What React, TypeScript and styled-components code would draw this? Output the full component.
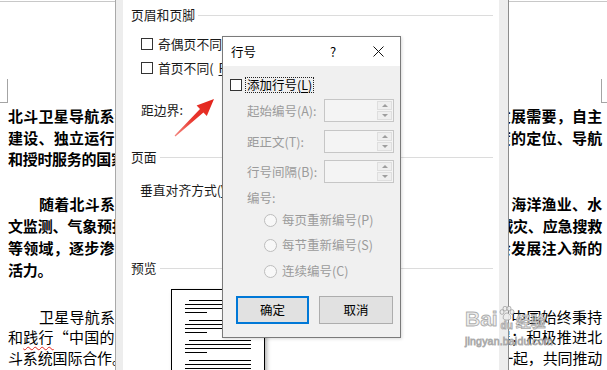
import React from "react";
import styled, { createGlobalStyle, css } from "styled-components";

const GlobalStyle = createGlobalStyle`
  html, body {
    margin: 0;
    padding: 0;
    background: #fff;
  }
  body {
    font-family: "Noto Sans CJK SC", "Noto Sans", sans-serif;
    color: #000;
  }
`;

const Screen = styled.div`
  position: relative;
  width: 607px;
  height: 370px;
  overflow: hidden;
  background: #fff;
`;

/* ---------- document page behind the dialogs ---------- */

const Page = styled.div`
  margin-top: 1px;
  border-top: 1px solid #c8c8c8;
`;

const MarkRow = styled.div`
  display: flex;
  justify-content: space-between;
  align-items: flex-end;
  height: 101px;
`;

const CropMark = styled.div<{ $side: "left" | "right" }>`
  height: 24px;
  box-sizing: border-box;
  border-bottom: 1px solid #a4a4a4;
  ${(p) =>
    p.$side === "left"
      ? css`
          width: 8px;
          border-right: 1px solid #a4a4a4;
        `
      : css`
          width: 6px;
          border-left: 1px solid #a4a4a4;
        `}
`;

const Doc = styled.div`
  padding: 0 5px 0 8px;
`;

const Para = styled.div<{ $bold?: boolean; $lh: number; $gap: number }>`
  margin-top: ${(p) => p.$gap}px;
  font-size: 15px;
  letter-spacing: -0.3px;
  line-height: ${(p) => p.$lh}px;
  font-weight: ${(p) => (p.$bold ? 700 : 400)};
`;

const Line = styled.div<{ $indent?: boolean; $last?: boolean }>`
  padding-left: ${(p) => (p.$indent ? "31px" : "0")};
  text-align: justify;
  text-align-last: ${(p) => (p.$last ? "left" : "justify")};
`;

const Typo = styled.span`
  text-decoration: underline wavy #e0231b;
  text-decoration-thickness: 1px;
  text-underline-offset: 3px;
`;

/* ---------- page setup dialog (partly visible) ---------- */

const SetupFrame = styled.div`
  position: absolute;
  left: 115px;
  top: 0;
  width: 394px;
  height: 370px;
  box-sizing: border-box;
  display: flex;
  border-left: 1px solid #a9a9a9;
  border-right: 1px solid #8c8c8c;
  background: #ededed;
  padding: 0 9px 0 7px;
`;

const SetupBody = styled.div`
  flex: 1;
  background: #fff;
  display: flex;
  flex-direction: column;
  padding: 0 6px 0 8px;
  font-size: 12.8px;
  line-height: 18px;
  color: #1a1a1a;
  overflow: hidden;
`;

const GroupHeader = styled.div<{ $top: number }>`
  margin-top: ${(p) => p.$top}px;
  height: 18px;
  display: flex;
  align-items: center;
  gap: 3px;
  white-space: nowrap;
  &::after {
    content: "";
    flex: 1;
    height: 1px;
    background: #dcdcdc;
  }
`;

const SetupRow = styled.div<{ $top: number; $indent: number }>`
  margin-top: ${(p) => p.$top}px;
  padding-left: ${(p) => p.$indent}px;
  height: 18px;
  display: flex;
  align-items: center;
  gap: 5px;
  white-space: nowrap;
`;

const CheckBox = styled.span`
  flex: none;
  width: 12px;
  height: 12px;
  box-sizing: border-box;
  border: 1px solid #333;
  background: #fff;
`;

const Key = styled.span`
  text-decoration: underline;
  text-underline-offset: 2px;
`;

const PreviewSheet = styled.div`
  margin: 12px 0 0 40px;
  width: 94px;
  height: 110px;
  flex: none;
  box-sizing: border-box;
  border: 1px solid #000;
  background: #fff;
  box-shadow: 2px 2px 4px rgba(0, 0, 0, 0.3);
  padding: 10px 0 0 13px;
`;

const PreviewPara = styled.div`
  display: flex;
  flex-direction: column;
  gap: 3px;
  margin-bottom: 7px;
`;

const PreviewLine = styled.div<{ $kind: "first" | "full" | "short" }>`
  height: 1px;
  background: #000;
  margin-left: ${(p) => (p.$kind === "first" ? 4 : 0)}px;
  width: ${(p) => (p.$kind === "short" ? 22 : p.$kind === "first" ? 62 : 66)}px;
`;

/* ---------- line numbers dialog ---------- */

const LineDialog = styled.div`
  position: absolute;
  left: 222px;
  top: 36px;
  width: 179px;
  height: 302px;
  box-sizing: border-box;
  border: 1px solid #7a7a7a;
  background: #f0f0f0;
  display: flex;
  flex-direction: column;
  font-size: 12.5px;
  line-height: 18px;
  box-shadow: 1px 1px 3px rgba(0, 0, 0, 0.15);
`;

const TitleBar = styled.div`
  height: 29px;
  flex: none;
  background: #fff;
  display: flex;
  align-items: center;
  padding-left: 8px;
  color: #000;
`;

const Title = styled.div`
  flex: 1;
`;

const HelpButton = styled.div`
  width: 24px;
  text-align: center;
  font-size: 13px;
  margin-right: 11px;
`;

const CloseButton = styled.div`
  width: 44px;
  height: 29px;
  display: flex;
  align-items: center;
  justify-content: center;
`;

const DialogBody = styled.div`
  display: flex;
  flex-direction: column;
  padding: 0 6px 0 7px;
`;

const Row = styled.div<{ $top: number; $indent?: number }>`
  margin-top: ${(p) => p.$top}px;
  padding-left: ${(p) => p.$indent ?? 0}px;
  display: flex;
  align-items: center;
  white-space: nowrap;
`;

const FocusLabel = styled.span`
  margin-left: 3px;
  padding: 0 1px;
  line-height: 14px;
  border: 1px dotted #222;
`;

const Muted = styled.span`
  flex: 1;
  color: #9b9b9b;
`;

const SpinBox = styled.div`
  width: 70px;
  height: 23px;
  box-sizing: border-box;
  border: 1px solid #c6c6c6;
  background: #f4f4f4;
  display: flex;
  justify-content: flex-end;
  padding: 1px;
`;

const SpinButtons = styled.div`
  width: 15px;
  display: flex;
  flex-direction: column;
  gap: 1px;
`;

const SpinButton = styled.div`
  flex: 1;
  box-sizing: border-box;
  border: 1px solid #dedede;
  background: #efefef;
  display: flex;
  align-items: center;
  justify-content: center;
`;

const Tri = styled.span<{ $down?: boolean }>`
  width: 0;
  height: 0;
  border-left: 3px solid transparent;
  border-right: 3px solid transparent;
  ${(p) =>
    p.$down
      ? css`
          border-top: 3px solid #9e9e9e;
        `
      : css`
          border-bottom: 3px solid #9e9e9e;
        `}
`;

const Radio = styled.span`
  flex: none;
  width: 13px;
  height: 13px;
  box-sizing: border-box;
  border-radius: 50%;
  border: 1px solid #bdbdbd;
  background: #f8f8f8;
  margin-right: 5px;
`;

const ButtonRow = styled.div`
  margin-top: 16px;
  padding-left: 6px;
  display: flex;
  gap: 10px;
`;

const DlgButton = styled.div<{ $primary?: boolean }>`
  width: ${(p) => (p.$primary ? 73 : 74)}px;
  height: 28px;
  box-sizing: border-box;
  background: #e1e1e1;
  border: ${(p) => (p.$primary ? "2px solid #0078d7" : "1px solid #adadad")};
  display: flex;
  align-items: center;
  justify-content: center;
  color: #000;
`;

/* ---------- overlays ---------- */

const ArrowSvg = styled.svg`
  position: absolute;
  left: 165px;
  top: 92px;
`;

const Watermark = styled.div`
  position: absolute;
  left: 465px;
  top: 306px;
  display: flex;
  flex-direction: column;
  font-family: "Liberation Sans", Arial, sans-serif;
  color: rgba(236, 236, 236, 0.9);
  -webkit-text-stroke: 0.9px rgba(140, 140, 140, 0.7);
  pointer-events: none;
`;

const MarkTop = styled.div`
  display: flex;
  align-items: flex-end;
  gap: 1px;
`;

const BaiText = styled.span`
  font-size: 21px;
  font-weight: 700;
  line-height: 24px;
`;

const DuBlock = styled.div`
  display: flex;
  flex-direction: column;
  align-items: center;
  font-size: 10px;
  font-weight: 700;
  line-height: 10px;
`;

const JingyanText = styled.span`
  font-family: "Noto Sans CJK SC", sans-serif;
  font-size: 15px;
  font-weight: 700;
  line-height: 20px;
`;

const SiteText = styled.span`
  margin-top: 4px;
  font-size: 10.5px;
  letter-spacing: 0.2px;
`;

function CloseIcon() {
  return (
    <svg width="11" height="11" viewBox="0 0 11 11">
      <path d="M0.5 0.5 L10.5 10.5 M10.5 0.5 L0.5 10.5" stroke="#111" strokeWidth="1" />
    </svg>
  );
}

function Paw() {
  return (
    <svg width="16" height="15" viewBox="0 0 16 15">
      <g fill="rgba(236,236,236,0.9)" stroke="rgba(140,140,140,0.7)" strokeWidth="0.9">
        <ellipse cx="3" cy="6" rx="2" ry="2.4" />
        <ellipse cx="6" cy="2.6" rx="2" ry="2.4" />
        <ellipse cx="10" cy="2.6" rx="2" ry="2.4" />
        <ellipse cx="13" cy="6" rx="2" ry="2.4" />
        <path d="M8 7 C5 7 3.5 11 4.5 13 C5.5 14.5 10.5 14.5 11.5 13 C12.5 11 11 7 8 7 Z" />
      </g>
    </svg>
  );
}

function Spin() {
  return (
    <SpinBox>
      <SpinButtons>
        <SpinButton>
          <Tri />
        </SpinButton>
        <SpinButton>
          <Tri $down />
        </SpinButton>
      </SpinButtons>
    </SpinBox>
  );
}

const previewParas = [0, 1, 2, 3];

export default function App() {
  return (
    <Screen lang="zh-CN">
      <GlobalStyle />

      <Page>
        <MarkRow>
          <CropMark $side="left" />
          <CropMark $side="right" />
        </MarkRow>
        <Doc>
          <Para $bold $lh={21.5} $gap={2}>
            <Line>北斗卫星导航系统（以下简称北斗系统）是中国着眼国家安全和经济社会发展需要，自主</Line>
            <Line>建设、独立运行的卫星导航系统，是为全球用户提供全天候全天时、高精度的定位、导航</Line>
            <Line $last>和授时服务的国家重要时空基础设施。</Line>
          </Para>
          <Para $bold $lh={22} $gap={23}>
            <Line $indent>随着北斗系统建设和服务能力的发展，相关产品广泛应用于交通运输、海洋渔业、水</Line>
            <Line>文监测、气象预报、测绘地理信息、森林防火、通信时统、电力调度、救灾减灾、应急搜救</Line>
            <Line>等领域，逐步渗透到人类社会生产和人们生活方方面面，为全球经济和社会发展注入新的</Line>
            <Line $last>活力。</Line>
          </Para>
          <Para $lh={20.5} $gap={26}>
            <Line $indent>卫星导航系统是全球公共资源，多系统兼容与互操作已成为发展趋势。中国始终秉持</Line>
            <Line>
              和<Typo>践行</Typo>“中国的北斗，世界的北斗”发展理念，服务“一带一路”建设发展；积极推进北
            </Line>
            <Line>斗系统国际合作。与其他卫星导航系统携手，与各个国家、地区和国际组织一起，共同推动</Line>
          </Para>
        </Doc>
      </Page>

      <SetupFrame>
        <SetupBody>
          <GroupHeader $top={6}>页眉和页脚</GroupHeader>
          <SetupRow $top={10.5} $indent={10}>
            <CheckBox />
            奇偶页不同(<Key>O</Key>)
          </SetupRow>
          <SetupRow $top={6} $indent={10}>
            <CheckBox />
            首页不同(<Key>P</Key>)
          </SetupRow>
          <SetupRow $top={24.5} $indent={10}>
            距边界:
          </SetupRow>
          <GroupHeader $top={29}>页面</GroupHeader>
          <SetupRow $top={15} $indent={9}>
            <span>
              垂直对齐方式(<Key>V</Key>):
            </span>
          </SetupRow>
          <GroupHeader $top={60}>预览</GroupHeader>
          <PreviewSheet>
            {previewParas.map((i) => (
              <PreviewPara key={i}>
                <PreviewLine $kind="first" />
                <PreviewLine $kind="full" />
                <PreviewLine $kind="full" />
                <PreviewLine $kind="short" />
              </PreviewPara>
            ))}
          </PreviewSheet>
        </SetupBody>
      </SetupFrame>

      <ArrowSvg width="60" height="50" viewBox="165 92 60 50">
        <defs>
          <linearGradient id="arrowFill" x1="175" y1="136" x2="214" y2="99" gradientUnits="userSpaceOnUse">
            <stop offset="0" stopColor="#f3877f" />
            <stop offset="0.45" stopColor="#e9372e" />
            <stop offset="1" stopColor="#e2231b" />
          </linearGradient>
        </defs>
        <polygon
          points="174.6,135.5 200,108.9 196.6,105.4 214,99 206.8,116 203.4,112.5 175.4,136.5"
          fill="url(#arrowFill)"
        />
      </ArrowSvg>

      <LineDialog>
        <TitleBar>
          <Title>行号</Title>
          <HelpButton>?</HelpButton>
          <CloseButton>
            <CloseIcon />
          </CloseButton>
        </TitleBar>
        <DialogBody>
          <Row $top={11}>
            <CheckBox />
            <FocusLabel>
              添加行号(<Key>L</Key>)
            </FocusLabel>
          </Row>
          <Row $top={6} $indent={17}>
            <Muted>起始编号(A):</Muted>
            <Spin />
          </Row>
          <Row $top={8} $indent={17}>
            <Muted>距正文(T):</Muted>
            <Spin />
          </Row>
          <Row $top={7} $indent={17}>
            <Muted>行号间隔(B):</Muted>
            <Spin />
          </Row>
          <Row $top={6} $indent={17}>
            <Muted>编号:</Muted>
          </Row>
          <Row $top={4} $indent={34}>
            <Radio />
            <Muted>每页重新编号(P)</Muted>
          </Row>
          <Row $top={7} $indent={34}>
            <Radio />
            <Muted>每节重新编号(S)</Muted>
          </Row>
          <Row $top={8} $indent={34}>
            <Radio />
            <Muted>连续编号(C)</Muted>
          </Row>
          <ButtonRow>
            <DlgButton $primary>确定</DlgButton>
            <DlgButton>取消</DlgButton>
          </ButtonRow>
        </DialogBody>
      </LineDialog>

      <Watermark>
        <MarkTop>
          <BaiText>Bai</BaiText>
          <DuBlock>
            <Paw />
            du
          </DuBlock>
          <JingyanText>经验</JingyanText>
        </MarkTop>
        <SiteText>jingyan.baidu.com</SiteText>
      </Watermark>
    </Screen>
  );
}
